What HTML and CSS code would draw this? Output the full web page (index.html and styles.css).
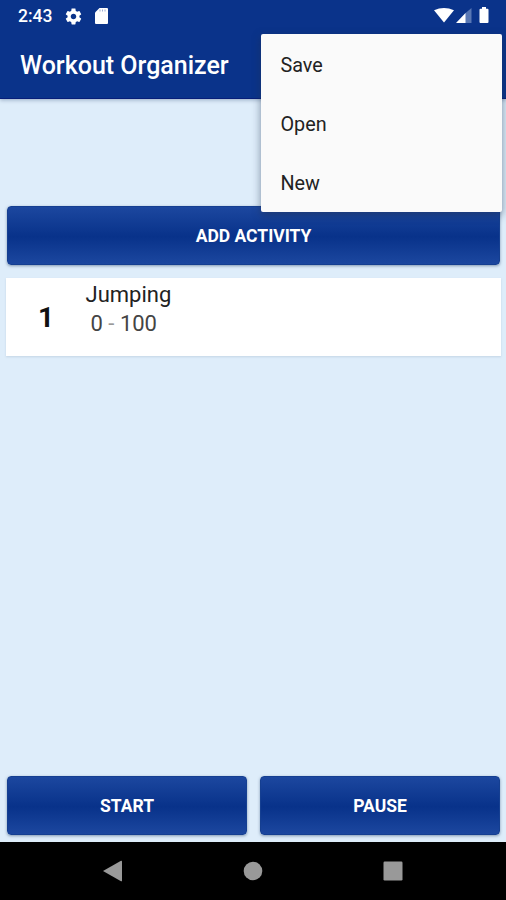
FILE: index.html
```html
<!DOCTYPE html>
<html lang="en">
<head>
<meta charset="utf-8">
<title>Workout Organizer</title>
<link rel="stylesheet" href="styles.css">
</head>
<body>
<div class="screen">
  <header class="top">
    <div class="status">
      <span class="time">2:43</span>
      <svg class="gear" width="19" height="19" viewBox="0 0 24 24"><path fill="#fff" d="M19.43 12.98c.04-.32.07-.64.07-.98s-.03-.66-.07-.98l2.11-1.65c.19-.15.24-.42.12-.64l-2-3.46c-.12-.22-.39-.3-.61-.22l-2.49 1c-.52-.4-1.08-.73-1.69-.98l-.38-2.65C14.46 2.18 14.25 2 14 2h-4c-.25 0-.46.18-.49.42l-.38 2.65c-.61.25-1.17.59-1.69.98l-2.49-1c-.23-.09-.49 0-.61.22l-2 3.46c-.13.22-.07.49.12.64l2.11 1.65c-.04.32-.07.65-.07.98s.03.66.07.98l-2.11 1.65c-.19.15-.24.42-.12.64l2 3.46c.12.22.39.3.61.22l2.49-1c.52.4 1.08.73 1.69.98l.38 2.65c.03.24.24.42.49.42h4c.25 0 .46-.18.49-.42l.38-2.65c.61-.25 1.17-.59 1.69-.98l2.49 1c.23.09.49 0 .61-.22l2-3.46c.12-.22.07-.49-.12-.64l-2.11-1.65zM12 15.500c-1.930 0-3.500-1.570-3.500-3.500s1.570-3.500 3.500-3.500 3.500 1.570 3.500 3.500-1.570 3.500-3.500 3.500z"/></svg>
      <svg class="card-icon" width="13" height="16" viewBox="0 0 13 16"><path fill="#fff" d="M4.500 0H12q1 0 1 1v14q0 1-1 1H1q-1 0-1-1V4.500z"/><path stroke="#9dadd2" d="M5 1.500v2M7.500 1.500v2M10 1.500v2"/></svg>
      <span class="spacer"></span>
      <svg width="56" height="18" viewBox="0 0 56 18"><path fill="#fff" d="M0 3.300Q10 -1.500 20 3.300L10 15.500z"/><path fill="#5877b4" d="M31 6.500L37.500 1v15H31z"/><path fill="#fff" d="M22 16l9.500-10v10zM46.500 1.800h1.500V0h4v1.800h1.500q1 0 1 1V15q0 1-1 1h-7q-1 0-1-1V2.800q0-1 1-1z"/></svg>
    </div>
    <h1>Workout Organizer</h1>
  </header>
  <main>
    <button class="btn">ADD ACTIVITY</button>
    <section class="activity">
      <div class="number">1</div>
      <div class="details"><div class="name">Jumping</div><div class="range">0 <span class="dash">-</span> 100</div></div>
    </section>
    <div class="controls"><button class="btn">START</button><button class="btn">PAUSE</button></div>
  </main>
  <nav class="system">
    <svg width="20" height="22" viewBox="0 0 20 22"><path fill="#999" d="M0 11L18 .8q1-.4 1 .5v19.400q0 .9-1 .5z"/></svg>
    <svg width="20" height="20" viewBox="0 0 20 20"><circle cx="10" cy="10" r="9.300" fill="#999"/></svg>
    <svg width="20" height="20" viewBox="0 0 20 20"><rect x=".5" y=".5" width="19" height="19" rx="1.200" fill="#999"/></svg>
  </nav>
  <div class="menu"><div>Save</div><div>Open</div><div>New</div></div>
</div>
</body>
</html>
```
FILE: styles.css
```css
* { box-sizing: border-box; }
body { margin: 0; font-family: Roboto, "Liberation Sans", sans-serif; }
.screen { position: relative; width: 506px; height: 900px; overflow: hidden; display: flex; flex-direction: column; background: #deedfa; }
.top { height: 99px; flex: none; background: #0a338a; border-bottom: 1px solid #071e79; box-shadow: 0 1px 4px #3b557a70; color: #fff; }
.status { height: 32px; display: flex; align-items: center; padding: 0 16px 0 18px; }
.status svg { display: block; flex: none; }
.time { width: 46px; font-size: 17.5px; font-weight: 500; line-height: 20px; }
.card-icon { margin-left: 12px; }
.spacer { flex: 1; }
h1 { margin: 0; padding: 18px 0 0 20px; font-size: 25px; font-weight: 500; line-height: 32px; }
main { flex: 1; display: flex; flex-direction: column; padding: 107px 6px 7px 7px; }
.btn { display: block; flex: none; width: 493px; height: 59px; padding: 1px 0 0; border: 1px solid #153f91; border-radius: 4px; background: linear-gradient(#1c479f, #08328a 52%, #1c479f); box-shadow: 0 1px 3px #3b557a90; color: #fff; font: 700 17.5px/20px Roboto, sans-serif; }
.activity { display: flex; height: 78px; margin: 13px -1px 0; background: #fff; box-shadow: 0 1px 2px #8aa0b850; }
.number { width: 79.5px; padding: 24px 0 0 32px; font-size: 28px; font-weight: 700; line-height: 32px; color: #111; }
.details { font-size: 22px; line-height: 29px; padding-top: 2px; color: #222; }
.range { padding-left: 5px; color: #444; }
.dash { color: #999; }
.controls { display: flex; justify-content: space-between; margin-top: auto; }
.controls .btn { width: 240px; }
.system { height: 58px; flex: none; background: #000; display: flex; align-items: center; justify-content: space-between; padding: 0 103px; }
.menu { position: absolute; left: 260.5px; top: 34px; width: 241.5px; height: 178px; border-radius: 2px; background: #fafafa; box-shadow: 0 3px 9px #20304c85; color: #222; font-size: 19.8px; line-height: 59px; padding: 2px 20px 0; }
```
